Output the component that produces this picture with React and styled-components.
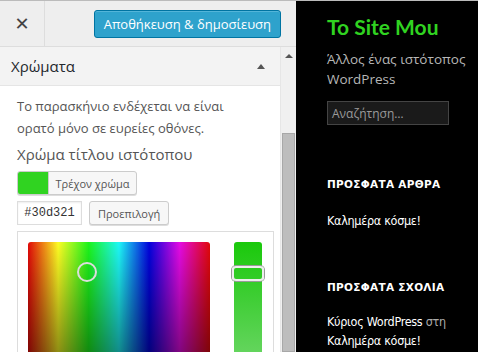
import React from 'react';
import styled, { createGlobalStyle } from 'styled-components';

const Global = createGlobalStyle`
  html, body {
    margin: 0;
    padding: 0;
    width: 478px;
    height: 352px;
    overflow: hidden;
    background: #000;
  }
  * { box-sizing: border-box; }
`

const Page = styled.div`
  display: flex;
  width: 478px;
  height: 352px;
  border-top: 1px solid #bbb;
  overflow: hidden;
  font-family: 'Open Sans', 'Noto Sans', sans-serif;
`

const Sidebar = styled.div`
  width: 296px;
  display: flex;
  flex-direction: column;
  background: #eee;
`

const Header = styled.div`
  height: 46px;
  display: flex;
  align-items: center;
  border-bottom: 1px solid #ddd;
  flex-shrink: 0;
`

const Close = styled.div`
  width: 45px;
  height: 100%;
  display: flex;
  align-items: center;
  justify-content: center;
  border-right: 1px solid #ddd;
  color: #444;
  font-size: 18px;
  font-weight: 700;
  line-height: 1;
  font-family: 'DejaVu Sans', sans-serif;
`

const Publish = styled.button`
  margin-left: auto;
  margin-right: 15px;
  height: 28px;
  padding: 0 9px;
  background: #2ea2cc;
  border: 1px solid #0074a2;
  border-radius: 3px;
  box-shadow: inset 0 1px 0 rgba(120, 200, 230, 0.5);
  color: #fff;
  font-family: 'Open Sans', sans-serif;
  font-size: 13px;
  margin-top: 1px;
`

const Body = styled.div`
  flex: 1;
  display: flex;
  min-height: 0;
`

const Content = styled.div`
  flex: 1;
  display: flex;
  flex-direction: column;
  min-height: 0;
`

const SectionHead = styled.div`
  height: 39px;
  flex-shrink: 0;
  display: flex;
  align-items: center;
  justify-content: space-between;
  padding: 0 15px 0 11px;
  background: #f3f3f3;
  color: #23282d;
  font-size: 15px;
  border-bottom: 1px solid #e5e5e5;
`

const Arrow = styled.span`
  width: 0;
  height: 0;
  border-left: 4px solid transparent;
  border-right: 4px solid transparent;
  border-bottom: 5px solid #555;
`

const Panel = styled.div`
  flex: 1;
  min-height: 0;
  overflow: hidden;
  background: #fff;
  padding: 9px 6px 0 17px;
  display: flex;
  flex-direction: column;
`

const Desc = styled.p`
  margin: 0;
  color: #555;
  font-size: 13px;
  line-height: 22px;
`

const Title = styled.div`
  margin-top: 4px;
  color: #555;
  font-size: 15px;
  line-height: 22px;
`

const ColorButton = styled.div`
  margin-top: 6px;
  display: flex;
  flex-shrink: 0;
  width: 120px;
  height: 24px;
  border: 1px solid #ccc;
  border-radius: 3px;
  background: #f7f7f7;
  overflow: hidden;
  box-shadow: 0 1px 0 #ddd;
`

const Swatch = styled.span`
  width: 31px;
  background: ${p => p.color};
  border-right: 1px solid #ccc;
`

const ButtonText = styled.span`
  flex: 1;
  display: flex;
  align-items: center;
  justify-content: center;
  color: #555;
  font-size: 11px;
`

const Row = styled.div`
  display: flex;
  flex-shrink: 0;
  gap: 7px;
  margin-top: 6px;
`

const HexInput = styled.div`
  width: 65px;
  height: 24px;
  border: 1px solid #ddd;
  display: flex;
  align-items: center;
  justify-content: center;
  font-family: 'Liberation Mono', monospace;
  font-size: 12px;
  color: #333;
  box-shadow: inset 0 1px 2px rgba(0, 0, 0, 0.07);
`

const SmallButton = styled.div`
  height: 24px;
  padding: 0 8px;
  border: 1px solid #ccc;
  border-radius: 3px;
  background: #f7f7f7;
  box-shadow: 0 1px 0 #ddd;
  display: flex;
  align-items: center;
  color: #555;
  font-size: 11px;
`

const Picker = styled.div`
  margin-top: 6px;
  width: 257px;
  flex: 1;
  flex-shrink: 0;
  min-height: 130px;
  border: 1px solid #ddd;
  border-bottom: none;
  padding: 10px 10px 0 10px;
  display: flex;
  gap: 24px;
`

const Square = styled.div`
  position: relative;
  width: 182px;
  height: 140px;
  border-radius: 3px 3px 0 0;
  background:
    linear-gradient(to bottom, rgba(0,0,0,0) 0%, rgba(0,0,0,0.55) 100%),
    linear-gradient(to right, #ff0000 0%, #ffff00 16.6%, #00ff00 33.3%, #00ffff 50%, #0000ff 66.6%, #ff00ff 83.3%, #ff0000 100%);
  filter: saturate(0.85);
`

const Dot = styled.span`
  position: absolute;
  left: 49px;
  top: 20px;
  width: 20px;
  height: 20px;
  border-radius: 50%;
  border: 2px solid #ddd;
  background: transparent;
`

const Strip = styled.div`
  position: relative;
  width: 28px;
  height: 140px;
  border-radius: 3px 3px 0 0;
  background: linear-gradient(to bottom, #1ac90b 0%, #3fce35 40%, #77d872 100%);
`

const Handle = styled.span`
  position: absolute;
  left: -2px;
  right: -2px;
  top: 24px;
  height: 15px;
  border: 2px solid #eee;
  border-radius: 4px;
  box-shadow: 0 0 0 1px #999;
`

const Scrollbar = styled.div`
  width: 17px;
  display: flex;
  flex-direction: column;
  align-items: center;
  background: #f0f0f0;
  border-left: 1px solid #e6e6e6;
`

const ScrollUp = styled.span`
  margin-top: 7px;
  width: 0;
  height: 0;
  border-left: 4px solid transparent;
  border-right: 4px solid transparent;
  border-bottom: 4px solid #555;
`

const Thumb = styled.span`
  margin-top: 75px;
  width: 13px;
  flex: 1;
  background: #bdbdbd;
  border: 1px solid #a8a8a8;
`

const Preview = styled.div`
  flex: 1;
  background: #000;
  padding: 13px 0 0 31px;
  font-family: Lato, 'Open Sans', sans-serif;
`

const SiteTitle = styled.div`
  color: #30d321;
  font-size: 21px;
  font-weight: 700;
  line-height: 26px;
`

const Tagline = styled.div`
  margin-top: 9px;
  width: 140px;
  color: #b7b7b7;
  font-family: 'Open Sans', sans-serif;
  font-size: 13.5px;
  line-height: 20px;
`

const Search = styled.div`
  margin-top: 12px;
  width: 122px;
  height: 24px;
  background: #1a1a1a;
  border: 1px solid #444;
  color: #9a9a9a;
  font-family: 'Open Sans', sans-serif;
  font-size: 12px;
  display: flex;
  align-items: center;
  padding-left: 4px;
`

const WidgetTitle = styled.div`
  margin-top: ${p => p.gap}px;
  color: #fff;
  font-family: 'DejaVu Sans', sans-serif;
  font-size: 10.5px;
  font-weight: 700;
  letter-spacing: 0.3px;
`

const Link = styled.div`
  margin-top: ${p => p.gap || 0}px;
  color: #fff;
  font-family: 'DejaVu Sans Condensed', 'Liberation Sans Narrow', 'Liberation Sans', sans-serif;
  font-size: 12.5px;
  line-height: 19px;
  letter-spacing: -0.3px;
`

const Muted = styled.span`
  color: #aaa;
`

export default function App() {
  return (
    <>
      <Global />
      <Page>
        <Sidebar>
          <Header>
            <Close>✕</Close>
            <Publish>Αποθήκευση &amp; δημοσίευση</Publish>
          </Header>
          <Body>
            <Content>
              <SectionHead>
                Χρώματα
                <Arrow />
              </SectionHead>
              <Panel>
                <Desc>
                  Το παρασκήνιο ενδέχεται να είναι<br />
                  ορατό μόνο σε ευρείες οθόνες.
                </Desc>
                <Title>Χρώμα τίτλου ιστότοπου</Title>
                <ColorButton>
                  <Swatch color="#30d321" />
                  <ButtonText>Τρέχον χρώμα</ButtonText>
                </ColorButton>
                <Row>
                  <HexInput>#30d321</HexInput>
                  <SmallButton>Προεπιλογή</SmallButton>
                </Row>
                <Picker>
                  <Square>
                    <Dot />
                  </Square>
                  <Strip>
                    <Handle />
                  </Strip>
                </Picker>
              </Panel>
            </Content>
            <Scrollbar>
              <ScrollUp />
              <Thumb />
            </Scrollbar>
          </Body>
        </Sidebar>
        <Preview>
          <SiteTitle>To Site Mou</SiteTitle>
          <Tagline>Άλλος ένας ιστότοπος WordPress</Tagline>
          <Search>Αναζήτηση…</Search>
          <WidgetTitle gap={53}>ΠΡΟΣΦΑΤΑ ΑΡΘΡΑ</WidgetTitle>
          <Link gap={21}>Καλημέρα κόσμε!</Link>
          <WidgetTitle gap={51}>ΠΡΟΣΦΑΤΑ ΣΧΟΛΙΑ</WidgetTitle>
          <Link gap={19}>Κύριος WordPress <Muted>στη</Muted><br />Καλημέρα κόσμε!</Link>
        </Preview>
      </Page>
    </>
  );
}
